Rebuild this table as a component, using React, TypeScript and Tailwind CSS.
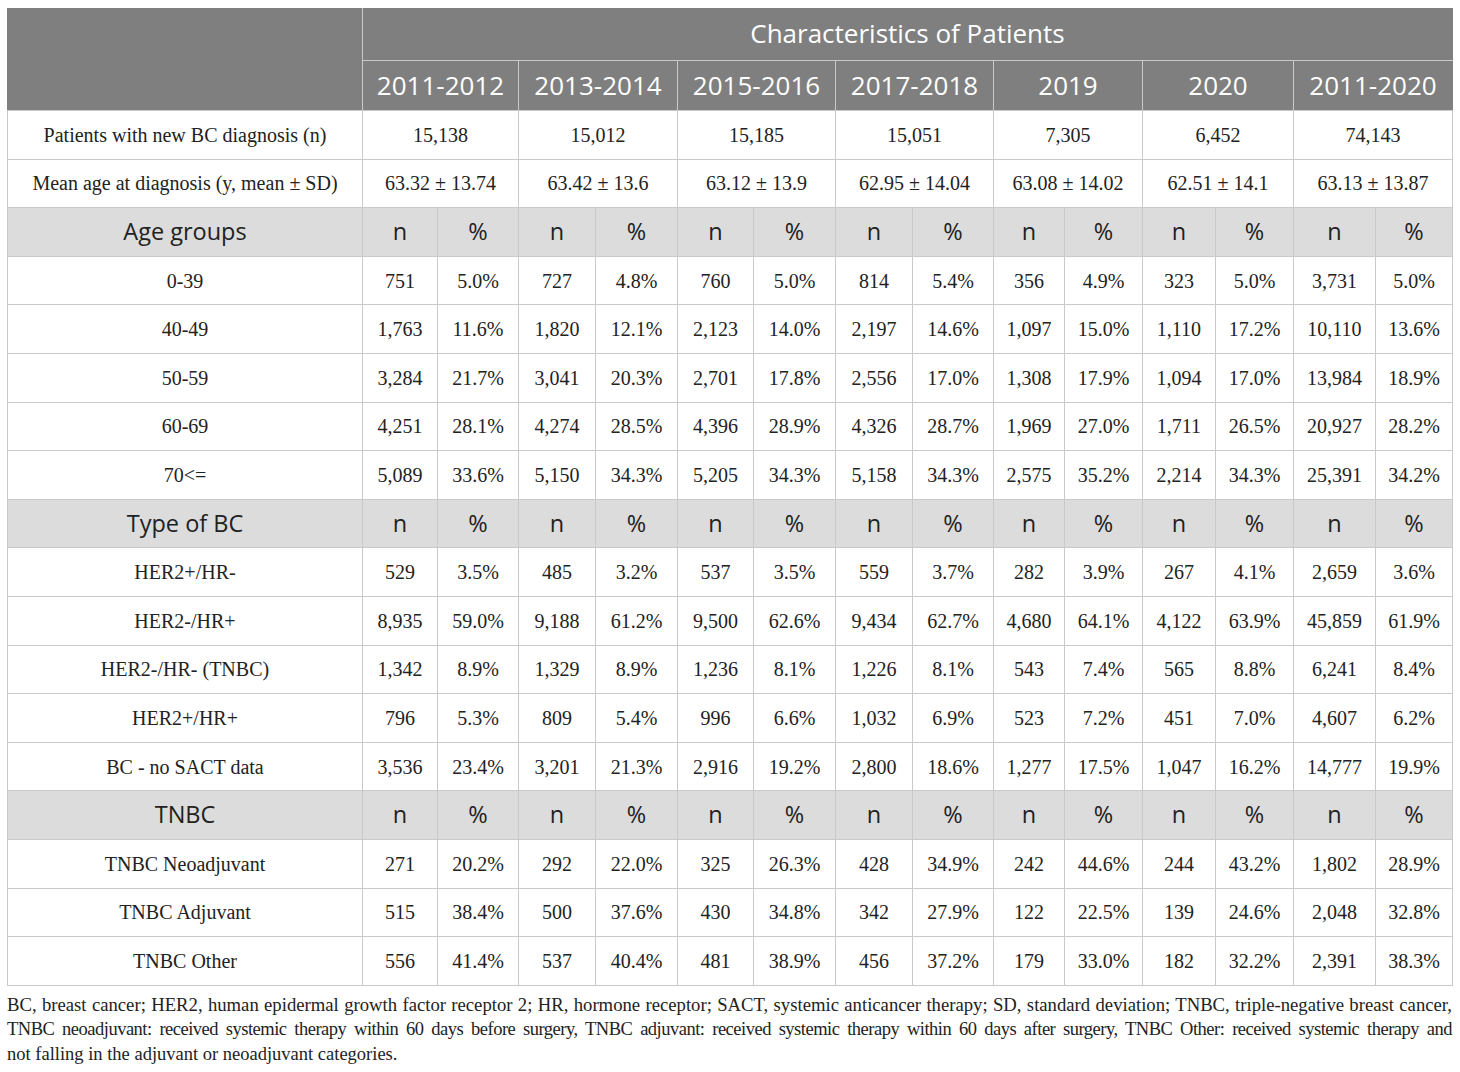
import React from 'react';

// Column widths taken from the reference (first column + n/% pairs)
const COLS = [355, 75, 81, 77, 82, 76, 82, 77, 81, 71, 78, 73, 78, 82, 77];

const YEARS = ['2011-2012', '2013-2014', '2015-2016', '2017-2018', '2019', '2020', '2011-2020'];

const SANS = "font-['Open_Sans',Lato,sans-serif]";

type Section = { title: string; rows: [string, string[]][] };

const sections: Section[] = [
  {
    title: 'Age groups',
    rows: [
      ['0-39', ['751', '5.0%', '727', '4.8%', '760', '5.0%', '814', '5.4%', '356', '4.9%', '323', '5.0%', '3,731', '5.0%']],
      ['40-49', ['1,763', '11.6%', '1,820', '12.1%', '2,123', '14.0%', '2,197', '14.6%', '1,097', '15.0%', '1,110', '17.2%', '10,110', '13.6%']],
      ['50-59', ['3,284', '21.7%', '3,041', '20.3%', '2,701', '17.8%', '2,556', '17.0%', '1,308', '17.9%', '1,094', '17.0%', '13,984', '18.9%']],
      ['60-69', ['4,251', '28.1%', '4,274', '28.5%', '4,396', '28.9%', '4,326', '28.7%', '1,969', '27.0%', '1,711', '26.5%', '20,927', '28.2%']],
      ['70<=', ['5,089', '33.6%', '5,150', '34.3%', '5,205', '34.3%', '5,158', '34.3%', '2,575', '35.2%', '2,214', '34.3%', '25,391', '34.2%']],
    ],
  },
  {
    title: 'Type of BC',
    rows: [
      ['HER2+/HR-', ['529', '3.5%', '485', '3.2%', '537', '3.5%', '559', '3.7%', '282', '3.9%', '267', '4.1%', '2,659', '3.6%']],
      ['HER2-/HR+', ['8,935', '59.0%', '9,188', '61.2%', '9,500', '62.6%', '9,434', '62.7%', '4,680', '64.1%', '4,122', '63.9%', '45,859', '61.9%']],
      ['HER2-/HR- (TNBC)', ['1,342', '8.9%', '1,329', '8.9%', '1,236', '8.1%', '1,226', '8.1%', '543', '7.4%', '565', '8.8%', '6,241', '8.4%']],
      ['HER2+/HR+', ['796', '5.3%', '809', '5.4%', '996', '6.6%', '1,032', '6.9%', '523', '7.2%', '451', '7.0%', '4,607', '6.2%']],
      ['BC - no SACT data', ['3,536', '23.4%', '3,201', '21.3%', '2,916', '19.2%', '2,800', '18.6%', '1,277', '17.5%', '1,047', '16.2%', '14,777', '19.9%']],
    ],
  },
  {
    title: 'TNBC',
    rows: [
      ['TNBC Neoadjuvant', ['271', '20.2%', '292', '22.0%', '325', '26.3%', '428', '34.9%', '242', '44.6%', '244', '43.2%', '1,802', '28.9%']],
      ['TNBC Adjuvant', ['515', '38.4%', '500', '37.6%', '430', '34.8%', '342', '27.9%', '122', '22.5%', '139', '24.6%', '2,048', '32.8%']],
      ['TNBC Other', ['556', '41.4%', '537', '40.4%', '481', '38.9%', '456', '37.2%', '179', '33.0%', '182', '32.2%', '2,391', '38.3%']],
    ],
  },
];

const td = 'border border-[#c9c9c9] text-center align-middle p-0';

const App: React.FC = () => {
  return (
    <div className="bg-white w-[1460px] min-h-[1072px] pt-[8px] px-[7px] font-['Liberation_Serif',serif] text-[#222]">
      <table className="table-fixed border-collapse w-[1445px]">
        <colgroup>
          {COLS.map((w, i) => (
            <col key={i} style={{ width: w }} />
          ))}
        </colgroup>
        <thead>
          <tr className="h-[52px] bg-[#7e7f7e] text-white">
            <th rowSpan={2} className="border border-[#c9c9c9] border-t-[#7e7f7e] border-l-[#7e7f7e]" />
            <th colSpan={14} className={`${td} border-t-[#7e7f7e] border-r-[#7e7f7e] ${SANS} font-normal text-[26px] pb-[3px]`}>
              Characteristics of Patients
            </th>
          </tr>
          <tr className="h-[50px] bg-[#7e7f7e] text-white">
            {YEARS.map((y, i) => (
              <th key={y} colSpan={2} className={`${td} ${i === YEARS.length - 1 ? 'border-r-[#7e7f7e]' : ''} ${SANS} font-normal text-[26px]`}>
                {y}
              </th>
            ))}
          </tr>
        </thead>
        <tbody className="text-[20px]">
          <tr className="h-[48.6px]">
            <td className={td}>Patients with new BC diagnosis (n)</td>
            {['15,138', '15,012', '15,185', '15,051', '7,305', '6,452', '74,143'].map((v, i) => (
              <td key={i} colSpan={2} className={td}>{v}</td>
            ))}
          </tr>
          <tr className="h-[48.6px]">
            <td className={td}>Mean age at diagnosis (y, mean ± SD)</td>
            {['63.32 ± 13.74', '63.42 ± 13.6', '63.12 ± 13.9', '62.95 ± 14.04', '63.08 ± 14.02', '62.51 ± 14.1', '63.13 ± 13.87'].map((v, i) => (
              <td key={i} colSpan={2} className={td}>{v}</td>
            ))}
          </tr>
          {sections.map((s) => (
            <React.Fragment key={s.title}>
              <tr className={`h-[48.6px] bg-[#dcdcdc] ${SANS} text-[23.5px] text-[#222]`}>
                <td className={td}>{s.title}</td>
                {YEARS.map((y) => (
                  <React.Fragment key={y}>
                    <td className={td}>n</td>
                    <td className={td}>%</td>
                  </React.Fragment>
                ))}
              </tr>
              {s.rows.map(([label, vals]) => (
                <tr key={label} className="h-[48.6px]">
                  <td className={td}>{label}</td>
                  {vals.map((v, i) => (
                    <td key={i} className={td}>{v}</td>
                  ))}
                </tr>
              ))}
            </React.Fragment>
          ))}
        </tbody>
      </table>
      {/* Footnote: lines are fixed as in the reference and justified to the table width */}
      <div className="w-[1445px] mt-[7px] text-[18.5px] leading-[24.5px] text-[#222]">
        <p className="text-justify [text-align-last:justify] whitespace-nowrap text-[18.7px]">
          BC, breast cancer; HER2, human epidermal growth factor receptor 2; HR, hormone receptor; SACT, systemic anticancer therapy; SD, standard deviation; TNBC, triple-negative breast cancer,
        </p>
        <p className="text-justify [text-align-last:justify] whitespace-nowrap tracking-[-0.5px]">
          TNBC neoadjuvant: received systemic therapy within 60 days before surgery, TNBC adjuvant: received systemic therapy within 60 days after surgery, TNBC Other: received systemic therapy and
        </p>
        <p>not falling in the adjuvant or neoadjuvant categories.</p>
      </div>
    </div>
  );
};

export default App;
